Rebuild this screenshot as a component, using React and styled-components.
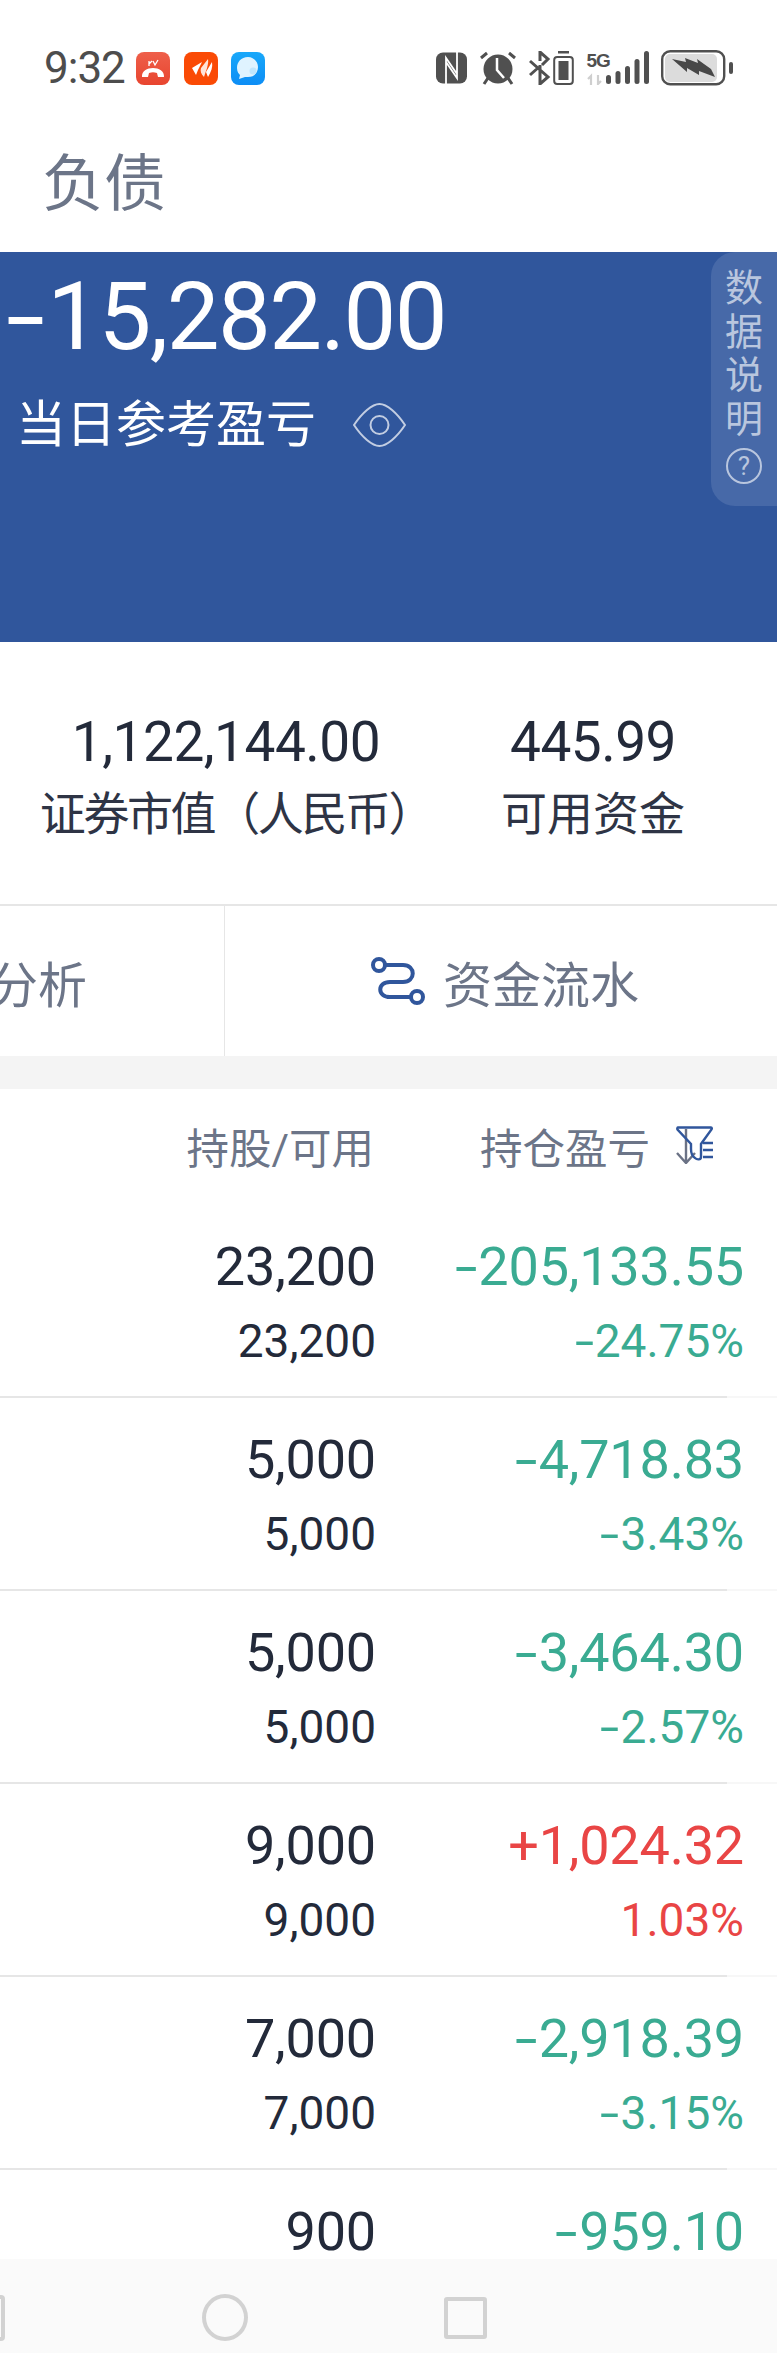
import React from 'react';
import styled, { createGlobalStyle } from 'styled-components';

const GlobalStyle = createGlobalStyle`
    html, body {
        margin: 0;
        padding: 0;
        background: #fff;
    }
    body {
        font-family: Roboto, "Noto Sans CJK SC", sans-serif;
    }
`;

const rows = [
    { hold: '23,200', free: '23,200', pnl: '-205,133.55', pct: '-24.75%' },
    { hold: '5,000', free: '5,000', pnl: '-4,718.83', pct: '-3.43%' },
    { hold: '5,000', free: '5,000', pnl: '-3,464.30', pct: '-2.57%' },
    { hold: '9,000', free: '9,000', pnl: '+1,024.32', pct: '1.03%', up: true },
    { hold: '7,000', free: '7,000', pnl: '-2,918.39', pct: '-3.15%' },
];

// the app's minus sign is longer than a hyphen
const Signed = ({ value }) =>
    value.startsWith('-') ? (
        <>
            <Minus>-</Minus>
            {value.slice(1)}
        </>
    ) : (
        value
    );

const CallIcon = () => (
    <AppIcon $bg="linear-gradient(#ee5f4a, #e8452f)">
        <svg width="34" height="33" viewBox="0 0 34 33">
            <path d="M13 9v5M13 12l3-3M17 9l2 4 3-5" stroke="#fff" strokeWidth="1.300" fill="none" />
            <path d="M6 25c-1-12 23-12 22 0h-6l-1-4c-3-1-5-1-8 0l-1 4z" fill="#fff" />
        </svg>
    </AppIcon>
);

const EastmoneyIcon = () => (
    <AppIcon $bg="#fa4a05">
        <svg width="34" height="33" viewBox="0 0 34 33">
            <path d="M8 16l10-6-4 8-2 5z" fill="#fff" />
            <path d="M24 7c1 5-2 12-4 18-3-3-4-6-3-9z" fill="#ffe3d8" />
            <path d="M28 10c1 5-1 10-4 15l-2-5z" fill="#fff" />
        </svg>
    </AppIcon>
);

const ChatIcon = () => (
    <AppIcon $bg="linear-gradient(#18a8fa, #0d8df5)">
        <svg width="34" height="33" viewBox="0 0 34 33">
            <path d="M17 5c-7 0-11 5-11 11 0 4 2 6 3 7l-1 4 6-2h3c6 0 10-4 10-10C27 10 23 5 17 5z" fill="#dff3ff" />
            <circle cx="22" cy="19" r="3.500" fill="#bfe6fd" />
        </svg>
    </AppIcon>
);

const NfcIcon = () => (
    <svg width="31" height="32" viewBox="0 0 31 32">
        <rect x="0" y="0.500" width="31" height="31" rx="7" fill="#505050" />
        <path d="M10 32V6l11 16M21 0v26L10 10" stroke="#fff" strokeWidth="1.800" fill="none" />
    </svg>
);

const AlarmIcon = () => (
    <svg width="36" height="34" viewBox="0 0 36 34">
        <path d="M1 7l6-5M35 7l-6-5" stroke="#505050" strokeWidth="3" fill="none" />
        <path d="M4 33l4-6M32 33l-4-6" stroke="#505050" strokeWidth="3" fill="none" />
        <circle cx="18" cy="18" r="14.500" fill="#505050" />
        <path d="M17 7v12l7 8" stroke="#fff" strokeWidth="2.500" fill="none" />
    </svg>
);

const BluetoothIcon = () => (
    <svg width="23" height="34" viewBox="0 0 23 34">
        <path d="M2 10l18 16-8 7V14M2 24l9-8M12 10V1l8 7-6 6" stroke="#505050" strokeWidth="3" fill="none" />
    </svg>
);

const SmallBattery = () => (
    <svg width="21" height="34" viewBox="0 0 21 34">
        <rect x="5" y="0" width="11" height="2.500" fill="#505050" />
        <rect x="1.200" y="6" width="18.600" height="27" rx="3" stroke="#505050" strokeWidth="2" fill="none" />
        <rect x="5.500" y="10" width="10" height="19" fill="#505050" />
    </svg>
);

const SignalIcon = () => (
    <SignalBox>
        <NetLabel>5G</NetLabel>
        <svg width="62" height="34" viewBox="0 0 62 34">
            <path d="M4 34V25l-3 3M11 24v9l3-3" stroke="#cfcfcf" strokeWidth="2.200" fill="none" />
            <rect x="19" y="24" width="5" height="9" rx="2.500" fill="#505050" />
            <rect x="28.500" y="20" width="5" height="13" rx="2.500" fill="#505050" />
            <rect x="38" y="15" width="5" height="18" rx="2.500" fill="#505050" />
            <rect x="47.500" y="8" width="5" height="25" rx="2.500" fill="#505050" />
            <rect x="57" y="0" width="5" height="33" rx="2.500" fill="#505050" />
        </svg>
    </SignalBox>
);

const BatteryIcon = () => (
    <svg width="72" height="36" viewBox="0 0 72 36">
        <rect x="1.200" y="1.200" width="62" height="33" rx="8" fill="#fff" stroke="#505050" strokeWidth="2.400" />
        <rect x="4" y="4" width="52" height="28" rx="5" fill="#dcdcdc" />
        <path d="M11 9l14 3-1-4 13 5-1-4 14 10 4 8-16-6v4l-12-7v4z" fill="#484848" />
        <rect x="68" y="12" width="4" height="12" rx="2" fill="#505050" />
    </svg>
);

const EyeIcon = () => (
    <svg width="55" height="44" viewBox="0 0 55 44">
        <path d="M2 22C10 10 20 1 27.500 1S45 10 53 22C45 34 35 43 27.500 43S10 34 2 22z" fill="none" stroke="#c2cde2" strokeWidth="2" />
        <circle cx="27.500" cy="22" r="9" fill="none" stroke="#c2cde2" strokeWidth="2" />
    </svg>
);

const FlowIcon = () => (
    <svg width="54" height="52" viewBox="0 0 54 52">
        <circle cx="8" cy="10" r="6" fill="none" stroke="#30569c" strokeWidth="4" />
        <circle cx="46" cy="42" r="6" fill="none" stroke="#30569c" strokeWidth="4" />
        <path d="M14 10h18c13 0 13 17 0 17H19c-13 0-13 15 0 15h21" fill="none" stroke="#30569c" strokeWidth="4" />
    </svg>
);

const SortFilterIcon = () => (
    <svg width="37" height="38" viewBox="0 0 37 38">
        <path d="M10 3v34M1 27l9 10 9-10" fill="none" stroke="#6b7285" strokeWidth="2.400" />
        <path d="M2 1.500h33c1 0 1 1 .5 2L25 18v13c0 3-4 3-6 1-3-2-4-5-4-9v-5L1.500 3.500c-.500-1 0-2 .5-2z" fill="none" stroke="#30569c" strokeWidth="2.400" />
        <path d="M27 17h10M27 24h10M27 31h10" stroke="#30569c" strokeWidth="2.400" />
    </svg>
);

export default function App() {
    return (
        <Page>
            <GlobalStyle />
            <StatusBar>
                <StatusLeft>
                    <Clock>9:32</Clock>
                    <CallIcon />
                    <EastmoneyIcon />
                    <ChatIcon />
                </StatusLeft>
                <StatusRight>
                    <NfcIcon />
                    <AlarmIcon />
                    <BtGroup>
                        <BluetoothIcon />
                        <SmallBattery />
                    </BtGroup>
                    <SignalIcon />
                    <BatteryIcon />
                </StatusRight>
            </StatusBar>
            <TitleBar>负债</TitleBar>
            <Hero>
                <HeroText>
                    <HeroAmount><Signed value="-15,282.00" /></HeroAmount>
                    <HeroLabelRow>
                        <HeroLabel>当日参考盈亏</HeroLabel>
                        <EyeIcon />
                    </HeroLabelRow>
                </HeroText>
                <DataNote>
                    <span>数</span>
                    <span>据</span>
                    <span>说</span>
                    <span>明</span>
                    <HelpCircle>?</HelpCircle>
                </DataNote>
            </Hero>
            <Stats>
                <Stat>
                    <StatValue>1,122,144.00</StatValue>
                    <StatLabel $tight>证券市值（人民币）</StatLabel>
                </Stat>
                <Stat>
                    <StatValue>445.99</StatValue>
                    <StatLabel>可用资金</StatLabel>
                </Stat>
            </Stats>
            <Tabs>
                <LeftTab>
                    <TabText>分析</TabText>
                </LeftTab>
                <RightTab>
                    <FlowIcon />
                    <TabText>资金流水</TabText>
                </RightTab>
            </Tabs>
            <Gap />
            <TableHead>
                <HoldHead>持股/可用</HoldHead>
                <PnlHead>
                    持仓盈亏
                    <SortFilterIcon />
                </PnlHead>
            </TableHead>
            {rows.map((row, i) => (
                <Row key={i}>
                    <HoldCell>
                        <Primary>{row.hold}</Primary>
                        <Secondary>{row.free}</Secondary>
                    </HoldCell>
                    <PnlCell $up={row.up}>
                        <Primary><Signed value={row.pnl} /></Primary>
                        <Secondary><Signed value={row.pct} /></Secondary>
                    </PnlCell>
                </Row>
            ))}
            <Row>
                <HoldCell>
                    <Primary>900</Primary>
                </HoldCell>
                <PnlCell>
                    <Primary><Signed value="-959.10" /></Primary>
                </PnlCell>
            </Row>
            <NavBar>
                <NavBack />
                <NavHome />
                <NavRecent />
            </NavBar>
        </Page>
    );
}

const Page = styled.div`
    position: relative;
    width: 777px;
    height: 2353px;
    overflow: hidden;
    background: #fff;
    display: flex;
    flex-direction: column;
`;

const Minus = styled.span`
    display: inline-block;
    width: 0.44em;
    text-align: left;
    transform: scaleX(1.5);
    transform-origin: left;
`;

const StatusBar = styled.div`
    height: 100px;
    flex: none;
    box-sizing: border-box;
    padding: 36px 44px 0 44px;
    display: flex;
    justify-content: space-between;
    align-items: center;
`;

const StatusLeft = styled.div`
    display: flex;
    align-items: center;
`;

const Clock = styled.span`
    width: 92px;
    font-size: 44px;
    line-height: 48px;
    letter-spacing: -1px;
    color: #4d4d4d;
`;

const AppIcon = styled.div`
    width: 34px;
    height: 33px;
    border-radius: 8px;
    margin-right: 13.500px;
    background: ${(props) => props.$bg};
    display: flex;
`;

const StatusRight = styled.div`
    display: flex;
    align-items: center;
    gap: 12.500px;
`;

const BtGroup = styled.div`
    display: flex;
    gap: 2px;
    align-items: center;
`;

const SignalBox = styled.div`
    position: relative;
    display: flex;
`;

const NetLabel = styled.span`
    position: absolute;
    left: 0;
    top: 1px;
    font-size: 19px;
    font-weight: 700;
    line-height: 17px;
    letter-spacing: -1px;
    color: #505050;
    font-family: "Liberation Sans", sans-serif;
`;

const TitleBar = styled.div`
    height: 152px;
    flex: none;
    padding-left: 42px;
    font-size: 62px;
    line-height: 170px;
    color: #6c7588;
`;

const Hero = styled.div`
    height: 390px;
    flex: none;
    background: #30569c;
    display: flex;
    justify-content: space-between;
    align-items: flex-start;
    color: #fff;
`;

const HeroText = styled.div`
    padding-left: 6px;
`;

const HeroAmount = styled.div`
    font-size: 94px;
    line-height: 100px;
    margin-top: 15px;
    letter-spacing: -1.600px;
    white-space: nowrap;
`;

const HeroLabelRow = styled.div`
    display: flex;
    align-items: center;
    gap: 36px;
    margin-top: 23px;
    padding-left: 10px;
`;

const HeroLabel = styled.span`
    font-size: 50px;
    line-height: 70px;
`;

const DataNote = styled.div`
    width: 66px;
    height: 254px;
    box-sizing: border-box;
    padding-top: 15px;
    background: #4769a8;
    border-radius: 24px 0 0 24px;
    display: flex;
    flex-direction: column;
    align-items: center;
    font-size: 38px;
    line-height: 43.500px;
    color: #b9c6de;
`;

const HelpCircle = styled.span`
    width: 36px;
    height: 36px;
    margin-top: 7px;
    border: 2px solid #b9c6de;
    border-radius: 50%;
    box-sizing: border-box;
    display: flex;
    align-items: center;
    justify-content: center;
    font-size: 26px;
    line-height: 30px;
`;

const Stats = styled.div`
    height: 264px;
    flex: none;
    box-sizing: border-box;
    padding-top: 70px;
    display: grid;
    grid-template-columns: 452px 282px;
    align-items: start;
    border-bottom: 2px solid #e6e6e6;
`;

const Stat = styled.div`
    text-align: center;
`;

const StatValue = styled.div`
    font-size: 55px;
    line-height: 60px;
    letter-spacing: -0.500px;
    color: #232a3a;
`;

const StatLabel = styled.div`
    font-size: 46px;
    line-height: 60px;
    margin-top: 12px;
    padding-left: ${(props) => (props.$tight ? '20px' : '0')};
    letter-spacing: ${(props) => (props.$tight ? '-2.400px' : '0')};
    color: #2e3445;
    white-space: nowrap;
`;

const Tabs = styled.div`
    height: 150px;
    flex: none;
    display: flex;
`;

const LeftTab = styled.div`
    width: 225px;
    flex: none;
    box-sizing: border-box;
    border-right: 1px solid #e6e6e6;
    display: flex;
    align-items: center;
    justify-content: flex-end;
    padding-right: 137px;
    overflow: hidden;
`;

const RightTab = styled.div`
    flex: 1;
    display: flex;
    align-items: center;
    gap: 18px;
    padding-left: 146px;
`;

const TabText = styled.span`
    font-size: 49px;
    color: #6c7588;
    white-space: nowrap;
`;

const Gap = styled.div`
    height: 33px;
    flex: none;
    background: #f4f4f4;
`;

const TableHead = styled.div`
    height: 116px;
    flex: none;
    box-sizing: border-box;
    padding-bottom: 4px;
    display: grid;
    grid-template-columns: 376px 368px;
    align-items: center;
    font-size: 42.500px;
    color: #6c7588;
`;

const HoldHead = styled.div`
    justify-self: end;
    margin-right: 2px;
`;

const PnlHead = styled.div`
    justify-self: end;
    display: flex;
    align-items: center;
    gap: 26px;
    margin-right: 31px;
`;

const Row = styled.div`
    position: relative;
    height: 193px;
    flex: none;
    box-sizing: border-box;
    display: grid;
    grid-template-columns: 376px 368px;

    &::after {
        content: '';
        position: absolute;
        left: 0;
        right: 0;
        bottom: 0;
        height: 2px;
        background: linear-gradient(to right, #e6e6e6 727px, #f7f7f7 727px);
    }
`;

const HoldCell = styled.div`
    text-align: right;
    color: #232a3a;
`;

const PnlCell = styled.div`
    text-align: right;
    color: ${(props) => (props.$up ? '#e94545' : '#3aab92')};
`;

const Primary = styled.div`
    font-size: 54px;
    line-height: 60px;
    letter-spacing: -0.200px;
    margin-top: 32px;
`;

const Secondary = styled.div`
    font-size: 46px;
    line-height: 50px;
    margin-top: 19px;
`;

const NavBar = styled.div`
    position: absolute;
    top: 2259px;
    left: 0;
    width: 777px;
    height: 94px;
    background: #fafafa;
`;

const NavBack = styled.div`
    position: absolute;
    left: -37px;
    top: 36px;
    width: 42px;
    height: 46px;
    box-sizing: border-box;
    border: 4px solid #d2d2d2;
    border-radius: 4px;
`;

const NavHome = styled.div`
    position: absolute;
    left: 202px;
    top: 35px;
    width: 46px;
    height: 47px;
    box-sizing: border-box;
    border: 4px solid #d2d2d2;
    border-radius: 50%;
`;

const NavRecent = styled.div`
    position: absolute;
    left: 444px;
    top: 38px;
    width: 43px;
    height: 42px;
    box-sizing: border-box;
    border: 4px solid #d2d2d2;
    border-radius: 3px;
`;
